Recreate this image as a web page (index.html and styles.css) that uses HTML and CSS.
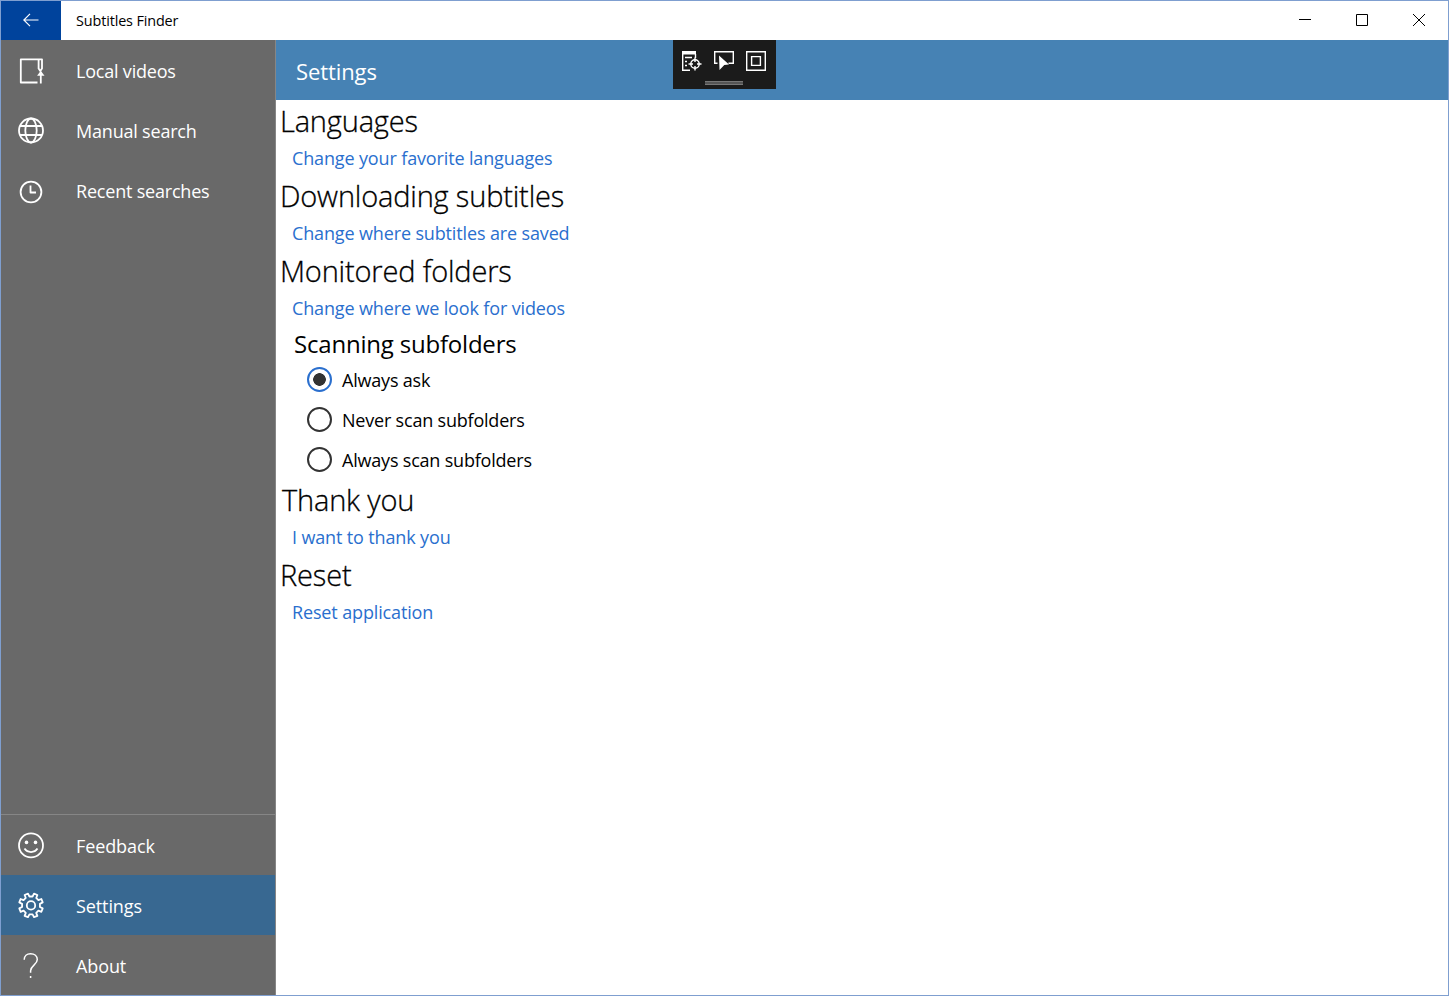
FILE: index.html
```html
<!DOCTYPE html>
<html lang="en">

<head>
    <meta charset="UTF-8">
    <meta name="viewport" content="width=device-width, initial-scale=1.0">
    <title>Subtitles Finder</title>
    <link rel="stylesheet" href="styles.css">
</head>

<body>
    <div class="window">
        <header class="titlebar">
            <div class="back">
                <svg width="16" height="14" viewBox="0 0 16 14"><path d="M15.5 7H1M7 .8L.8 7L7 13.2" /></svg>
            </div>
            <span class="app-title">Subtitles Finder</span>
            <div class="controls">
                <svg width="12" height="12" viewBox="0 0 12 12"><path d="M0 5.5h12" /></svg>
                <svg width="12" height="12" viewBox="0 0 12 12"><path d="M.5 .5h11v11H.5z" /></svg>
                <svg width="12" height="12" viewBox="0 0 12 12"><path d="M0 0L12 12M12 0L0 12" /></svg>
            </div>
        </header>

        <div class="main">
            <nav class="sidebar">
                <div class="nav-item">
                    <svg class="icon" viewBox="0 0 30 30"><path d="M21.5 26.5H4.8V3.3H26V12.5L24.3 15L22.6 12.5V3.3M24.8 27.5V16" /><path class="dot" d="M24.8 14.8L28.5 19.8H21.1z" /></svg>
                    <span>Local videos</span>
                </div>
                <div class="nav-item">
                    <svg class="icon" viewBox="0 0 30 30"><circle cx="15" cy="14.5" r="12" /><ellipse cx="15" cy="14.5" rx="5.7" ry="12" /><path d="M4 10H26M4 19H26" /></svg>
                    <span>Manual search</span>
                </div>
                <div class="nav-item">
                    <svg class="icon" viewBox="0 0 30 30"><circle cx="15" cy="16" r="10.4" /><path d="M14.5 9.5V16.5H20" /></svg>
                    <span>Recent searches</span>
                </div>
                <div class="nav-bottom">
                    <div class="nav-item">
                        <svg class="icon" viewBox="0 0 30 30"><circle cx="15" cy="15.4" r="12" /><path d="M8.5 18.6C11.5 23.2 18.5 23.2 21.5 18.6" /><circle class="dot" cx="10.5" cy="12.4" r="1.8" /><circle class="dot" cx="19.5" cy="12.4" r="1.8" /></svg>
                        <span>Feedback</span>
                    </div>
                    <div class="nav-item active">
                        <svg class="icon" viewBox="-15 -15.4 30 30"><path d="M8.92 1.57L11.7 3L10.4 6.4L7.42 5.2L5.2 7.42L6.4 10.4L3 11.7L1.57 8.92L-1.57 8.92L-3 11.7L-6.4 10.4L-5.2 7.42L-7.42 5.2L-10.4 6.4L-11.7 3L-8.92 1.57L-8.92 -1.57L-11.7 -3L-10.4 -6.4L-7.42 -5.2L-5.2 -7.42L-6.4 -10.4L-3 -11.7L-1.57 -8.92L1.57 -8.92L3 -11.7L6.4 -10.4L5.2 -7.42L7.42 -5.2L10.4 -6.4L11.7 -3L8.92 -1.57Z" /><circle r="4.2" /></svg>
                        <span>Settings</span>
                    </div>
                    <div class="nav-item">
                        <svg class="icon thin" viewBox="0 0 30 30"><path d="M8.2 9.8C8.2 5.8 11 3.7 14.5 3.7C18.5 3.7 21.3 6.1 21.3 9.6C21.3 14.8 14.6 15.5 14.6 20.8V22.8M14.6 26V28" /></svg>
                        <span>About</span>
                    </div>
                </div>
            </nav>

            <div class="page">
                <h1 class="page-header">Settings</h1>

                <section class="section">
                    <h2>Languages</h2>
                    <a>Change your favorite languages</a>
                </section>
                <section class="section">
                    <h2>Downloading subtitles</h2>
                    <a>Change where subtitles are saved</a>
                </section>
                <section class="section">
                    <h2>Monitored folders</h2>
                    <a>Change where we look for videos</a>
                    <h3>Scanning subfolders</h3>
                    <div class="option"><span class="radio checked"></span><span>Always ask</span></div>
                    <div class="option"><span class="radio"></span><span>Never scan subfolders</span></div>
                    <div class="option"><span class="radio"></span><span>Always scan subfolders</span></div>
                </section>
                <section class="section thanks">
                    <h2>Thank you</h2>
                    <a>I want to thank you</a>
                </section>
                <section class="section">
                    <h2>Reset</h2>
                    <a>Reset application</a>
                </section>
            </div>
        </div>

        <!-- debug toolbar, floats over the page header -->
        <div class="toolbar">
            <div class="tools">
                <svg width="22" height="22" viewBox="0 0 22 22"><path class="solid" d="M1 1H15V4.5H1z" /><path d="M1.7 1V20.3H9M14.5 4V8M4 7.5H11M4 11.5H6M4 15.5H6" /><circle cx="14" cy="14" r="4.2" /><path d="M14 7.5V12M14 16V20.5M7.5 14H12M16 14H20.5" /></svg>
                <svg width="22" height="22" viewBox="0 0 22 22"><path d="M4.5 13.3H1.7V1.7H20.3V13.3H15.5" /><path class="solid" d="M6 5.5L16 14.5L11.3 15L6.5 20z" /></svg>
                <svg width="22" height="22" viewBox="0 0 22 22"><path d="M1.7 1.7H20.3V20.3H1.7zM6.6 6.6H15.4V15.4H6.6z" /></svg>
            </div>
            <div class="grip"></div>
        </div>
    </div>
</body>

</html>
```

FILE: styles.css
```css
* {
    box-sizing: border-box;
}

body {
    margin: 0;
    font-family: "Open Sans", "Noto Sans", sans-serif;
    font-size: 18px;
    letter-spacing: -0.2px;
    color: #000;
    background: #fff;
}

svg {
    fill: none;
    stroke: currentColor;
}

.window {
    position: relative;
    display: flex;
    flex-direction: column;
    width: 1449px;
    height: 996px;
    border: 1px solid #7f9fd0;
    overflow: hidden;
}

.titlebar {
    display: flex;
    align-items: center;
    height: 39px;
}

.back {
    display: flex;
    align-items: center;
    justify-content: center;
    width: 60px;
    height: 39px;
    padding-bottom: 2px;
    color: #fff;
    background: #00439c;
}

.back svg {
    stroke-width: 1.2;
}

.app-title {
    margin-left: 15px;
    font-size: 14.4px;
    letter-spacing: -0.13px;
}

.controls {
    display: flex;
    gap: 45px;
    margin-left: auto;
    padding: 0 23px 1px 0;
}

.main {
    display: flex;
    flex: 1;
}

.sidebar {
    display: flex;
    flex-direction: column;
    width: 275px;
    padding-top: 1px;
    color: #fff;
    background: #696969;
    border-right: 1px solid #868686;
}

.nav-item {
    display: flex;
    align-items: center;
    height: 60px;
    padding-left: 15px;
    line-height: 60px;
}

.nav-item.active {
    background: #386891;
}

.nav-bottom {
    margin-top: auto;
    border-top: 1px solid #868686;
    letter-spacing: -0.1px;
}

.nav-bottom span {
    padding-top: 2px;
}

.icon {
    width: 30px;
    height: 30px;
    margin-right: 30px;
    stroke-width: 1.8;
    stroke-linejoin: round;
}

.icon.thin {
    stroke-width: 1.5;
}

.dot {
    fill: currentColor;
    stroke: none;
}

.page {
    flex: 1;
}

.page-header {
    height: 60px;
    margin: 0;
    padding-left: 20px;
    font-size: 22px;
    font-weight: 400;
    letter-spacing: -0.1px;
    line-height: 62px;
    color: #fff;
    background: #4682b4;
}

.section h2 {
    height: 42px;
    margin: 0;
    padding-left: 4px;
    font-size: 29px;
    font-weight: 300;
    letter-spacing: -0.18px;
    line-height: 41px;
    -webkit-text-stroke: 0.3px #000;
}

.thanks h2 {
    padding-left: 6px;
}

.section a {
    display: block;
    height: 33px;
    padding-left: 16px;
    letter-spacing: -0.14px;
    line-height: 33px;
    color: #2a6fce;
}

.section h3 {
    height: 34px;
    margin: 0;
    padding-left: 18px;
    font-size: 24px;
    font-weight: 400;
    line-height: 37px;
}

.option {
    display: flex;
    align-items: center;
    gap: 10px;
    height: 40px;
    padding-left: 31px;
    line-height: 40px;
}

.option span:last-child {
    padding-top: 1px;
}

.radio {
    width: 25px;
    height: 25px;
    border: 2.5px solid #333;
    border-radius: 50%;
}

.radio.checked {
    border-color: #2a6fce;
    background: radial-gradient(circle, #333 6px, transparent 6.6px);
}

.toolbar {
    position: absolute;
    top: 39px;
    left: 672px;
    width: 103px;
    height: 49px;
    padding: 10px 9px 0 8px;
    color: #fff;
    background: #1b1b1b;
}

.tools {
    display: flex;
    justify-content: space-between;
    stroke-width: 1.4;
}

.solid {
    fill: currentColor;
    stroke: none;
}

.grip {
    width: 38px;
    height: 4px;
    margin: 9px 0 0 24px;
    background: #555;
    border-top: 1px solid #777;
    border-bottom: 1px solid #777;
}
```
